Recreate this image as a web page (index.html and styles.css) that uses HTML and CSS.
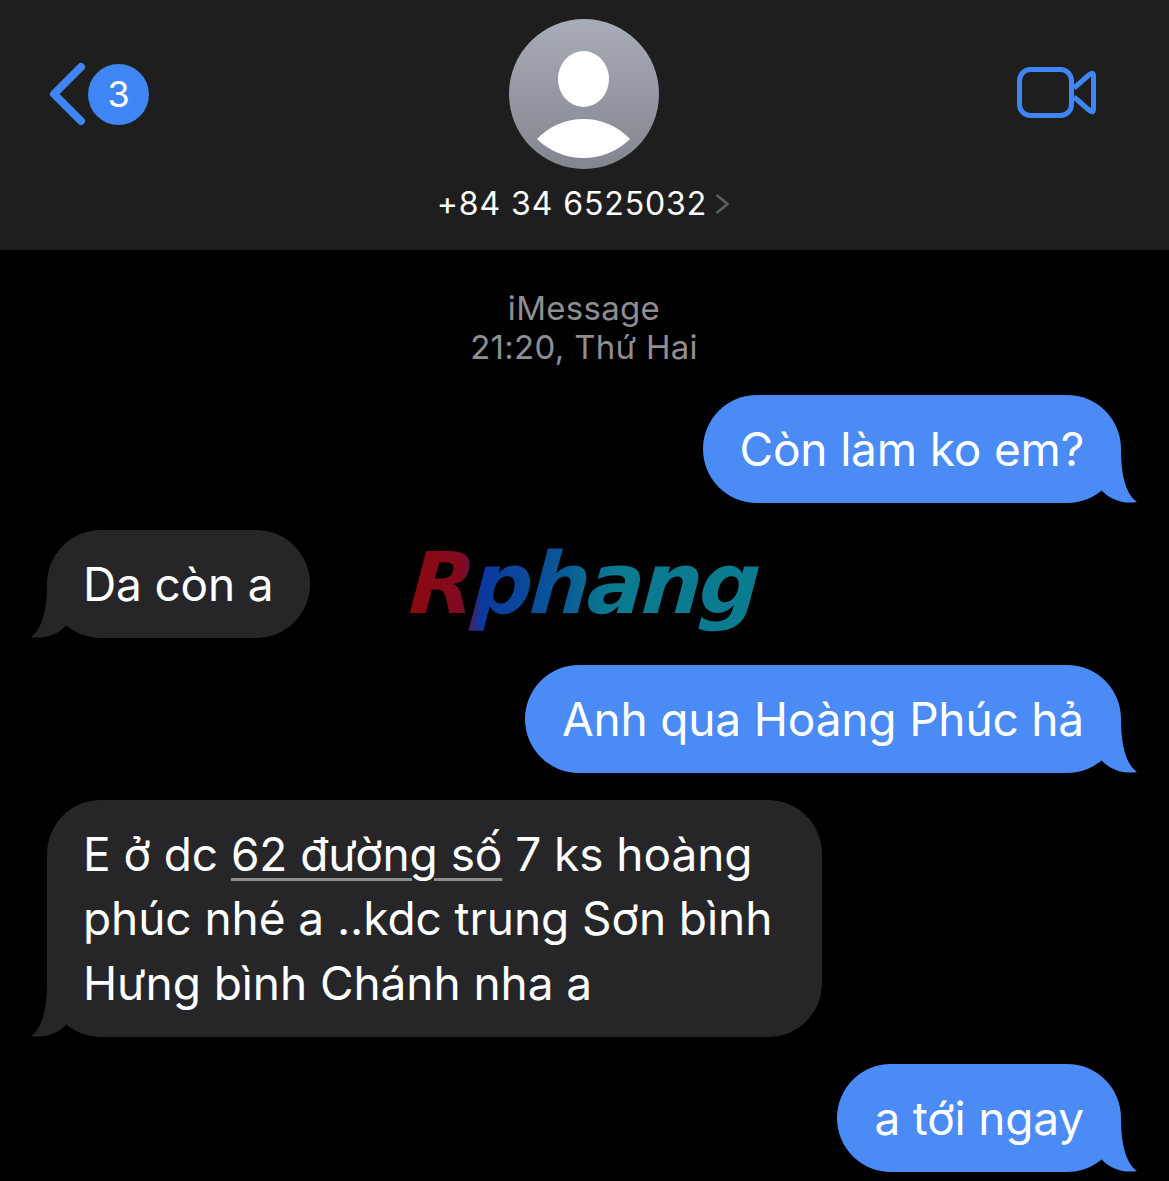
FILE: index.html
```html
<!DOCTYPE html>
<html lang="vi">
<head>
<meta charset="utf-8">
<title>Tin nhắn</title>
<link rel="stylesheet" href="styles.css">
</head>
<body>

<header class="topbar">
	<div class="back">
		<svg class="back-icon" width="38" height="64" viewBox="0 0 38 64">
			<path d="M33 5 L6 32 L33 59" fill="none" stroke="#3f85f3" stroke-width="8" stroke-linecap="round" stroke-linejoin="round"/>
		</svg>
		<span class="badge">3</span>
	</div>
	<svg class="avatar" width="150" height="150" viewBox="0 0 150 150">
		<defs>
			<linearGradient id="avatarFill" x1="0" y1="0" x2="0" y2="1">
				<stop offset="0" stop-color="#a8acb8"/>
				<stop offset="1" stop-color="#83868e"/>
			</linearGradient>
		</defs>
		<circle cx="75" cy="75" r="75" fill="url(#avatarFill)"/>
		<ellipse cx="74.5" cy="60" rx="25.5" ry="28" fill="#fff"/>
		<path d="M28 120 C40 107 57 100 74.5 100 C92 100 109 107 121 120 C109 132 92 139 74.5 139 C57 139 40 132 28 120 Z" fill="#fff"/>
	</svg>
	<svg class="video-icon" width="80" height="51" viewBox="0 0 80 51">
		<rect x="2.5" y="2.5" width="52" height="46" rx="11" fill="none" stroke="#3f85f3" stroke-width="5"/>
		<path d="M57 21 L72.5 7.5 Q76.5 4.5 76.5 9 L76.5 42 Q76.5 46.5 72.5 43.5 L57 30" fill="none" stroke="#3f85f3" stroke-width="5" stroke-linejoin="round"/>
	</svg>
	<div class="contact">
		<span class="phone">+84 34 6525032</span>
		<svg class="contact-arrow" width="14" height="20" viewBox="0 0 14 20">
			<path d="M1.5 1 L12.5 10 L1.5 19" fill="none" stroke="#5c5c5e" stroke-width="2.6"/>
		</svg>
	</div>
</header>

<main class="chat">
	<p class="stamp">iMessage<br>21:20, Thứ Hai</p>

	<div class="bubble sent">Còn làm ko em?
		<svg class="tail" width="50" height="54" viewBox="0 -14 50 54"><path d="M34 -14 C34 15 40 32 50 39 C38 41 25 38 15 28 L15 -14 Z"/></svg>
	</div>

	<div class="row">
		<div class="bubble received">Da còn a
			<svg class="tail" width="50" height="54" viewBox="0 -14 50 54"><path d="M34 -14 C34 15 40 32 50 39 C38 41 25 38 15 28 L15 -14 Z"/></svg>
		</div>
		<span class="watermark">Rphang</span>
	</div>

	<div class="bubble sent">Anh qua Hoàng Phúc hả
		<svg class="tail" width="50" height="54" viewBox="0 -14 50 54"><path d="M34 -14 C34 15 40 32 50 39 C38 41 25 38 15 28 L15 -14 Z"/></svg>
	</div>

	<div class="bubble received wrapped">E ở dc <span class="addr">62 đường số</span> 7 ks hoàng<br>phúc nhé a ..kdc trung Sơn bình<br>Hưng bình Chánh nha a
		<svg class="tail" width="50" height="54" viewBox="0 -14 50 54"><path d="M34 -14 C34 15 40 32 50 39 C38 41 25 38 15 28 L15 -14 Z"/></svg>
	</div>

	<div class="bubble sent">a tới ngay
		<svg class="tail" width="50" height="54" viewBox="0 -14 50 54"><path d="M34 -14 C34 15 40 32 50 39 C38 41 25 38 15 28 L15 -14 Z"/></svg>
	</div>
</main>

</body>
</html>
```

FILE: styles.css
```css
html, body {
	margin: 0;
	padding: 0;
}
body {
	height: 1181px;
	overflow: hidden;
	background-color: #000;
	color: #fff;
	font-family: Inter, "Noto Sans", sans-serif;
}
.topbar {
	display: grid;
	grid-template-columns: 509px 150px 1fr;
	grid-template-rows: 150px auto;
	align-items: center;
	align-content: start;
	height: 250px;
	box-sizing: border-box;
	padding-top: 19px;
	background-color: #1e1e1e;
}
.back {
	display: flex;
	align-items: center;
	padding-left: 48px;
}
.back-icon {
	display: block;
}
.badge {
	width: 61px;
	height: 61px;
	margin-left: 2px;
	border-radius: 50%;
	background-color: #3f85f3;
	font-size: 36px;
	line-height: 61px;
	text-align: center;
}
.avatar {
	display: block;
}
.video-icon {
	justify-self: end;
	margin-right: 72px;
	margin-bottom: 3px;
}
.contact {
	grid-column: 1 / -1;
	display: flex;
	justify-content: center;
	align-items: center;
	gap: 8px;
	margin-top: 15px;
	margin-left: -3px;
}
.phone {
	font-size: 32px;
	line-height: 40px;
	letter-spacing: 0.9px;
}
.chat {
	display: flex;
	flex-direction: column;
	gap: 27px;
	padding: 39px 48px 0 47px;
}
.stamp {
	margin: 0 0 1px;
	font-size: 33px;
	line-height: 39px;
	letter-spacing: 0.3px;
	text-align: center;
	color: #8e8e93;
}
.bubble {
	position: relative;
	box-sizing: border-box;
	padding: 22px 37px;
	border-radius: 54px;
	font-size: 46px;
	line-height: 64px;
	letter-spacing: -0.17px;
	white-space: nowrap;
	width: fit-content;
}
.sent {
	align-self: flex-end;
	background-color: #4a8bf5;
}
.received {
	align-self: flex-start;
	padding-left: 36px;
	background-color: #262628;
}
.wrapped {
	padding-right: 50px;
	line-height: 64.4px;
	letter-spacing: -0.07px;
}
.tail {
	position: absolute;
	bottom: 0;
	right: -16px;
	fill: #4a8bf5;
}
.received .tail {
	right: auto;
	left: -16px;
	transform: scaleX(-1);
	fill: #262628;
}
.addr {
	text-decoration: underline 3px #8e8e90;
	text-underline-offset: 7px;
}
.row {
	display: flex;
	align-items: center;
	gap: 100px;
}
.watermark {
	display: inline-block;
	font-family: "DejaVu Sans", sans-serif;
	font-size: 85px;
	font-weight: bold;
	font-style: italic;
	line-height: 100px;
	letter-spacing: -3px;
	transform: skewX(-4deg);
	background-image: linear-gradient(90deg, #8a0a0e 0%, #820a20 15%, #0b389e 21%, #0a5698 42%, #0a7a90 58%, #0a7c90 100%);
	-webkit-background-clip: text;
	background-clip: text;
	color: transparent;
}
```
